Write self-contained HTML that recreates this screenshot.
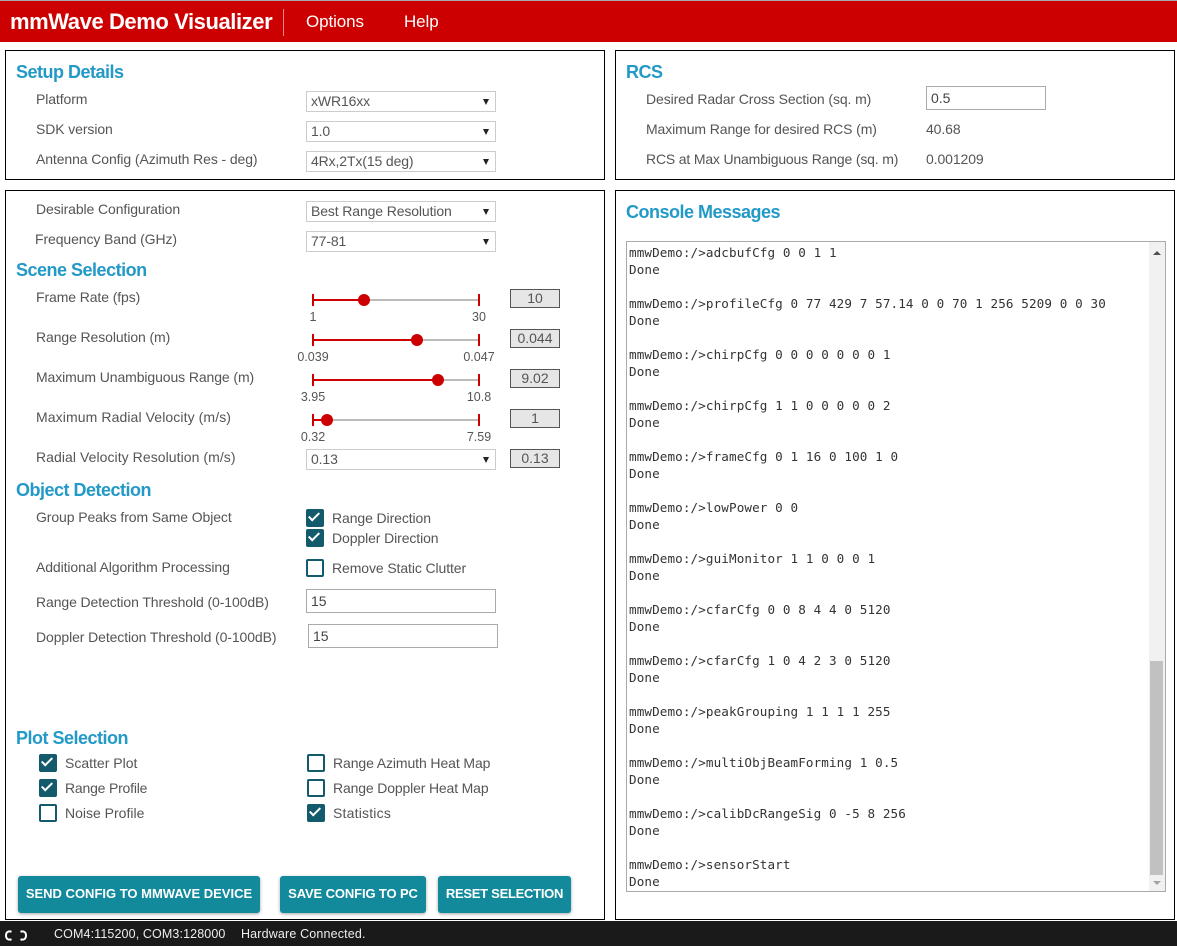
<!DOCTYPE html>
<html><head><meta charset="utf-8"><style>
html,body{margin:0;padding:0;width:1177px;height:946px;overflow:hidden;background:#fff;font-family:"Liberation Sans",sans-serif;color:#555;font-size:14px}
div,span,svg{position:absolute;box-sizing:border-box}
.t{white-space:nowrap;line-height:20px;height:20px;letter-spacing:-.1px}
.h{white-space:nowrap;line-height:24px;font-size:18px;font-weight:bold;color:#2299c7;letter-spacing:-.5px}
.p{border:1px solid #000;background:#fff}
.s{left:306px;width:190px;height:21px;border:1px solid #ccc;line-height:18px;padding-left:4px;color:#555;white-space:nowrap;letter-spacing:-.12px}
.s:after{content:"";position:absolute;right:6px;top:7px;border-left:3px solid transparent;border-right:3px solid transparent;border-top:6px solid #222}
.v{left:510px;width:50px;height:19px;background:#e6e6e6;border:1px solid #555;text-align:center;line-height:17px;color:#555}
.i{border:1px solid #aaa;height:24px;line-height:22px;padding-left:4px;color:#444}
.c{width:18px;height:18px;border:2px solid #135a6c;border-radius:2px;background:#fff}
.k{background:#135a6c}
.k:after{content:"";position:absolute;box-sizing:border-box;left:3.3px;top:-.8px;width:6px;height:11px;border:solid #fff;border-width:0 2px 2px 0;transform:rotate(45deg)}
.n{font-size:12.5px;line-height:16px;height:16px;white-space:nowrap;transform:translateX(-50%);color:#555}
.b{top:876px;height:37px;background:#128a9c;border-radius:3px;color:#fff;font-weight:bold;font-size:13px;line-height:36px;text-align:center;white-space:nowrap;box-shadow:0 1px 3px rgba(0,0,0,.35)}
pre{position:absolute;margin:0;left:2px;top:2px;font-family:"DejaVu Sans Mono",monospace;font-size:12.6px;line-height:17px;color:#333;letter-spacing:.11px}
</style></head><body>
<div style="left:0;top:0;width:1177px;height:42px;background:#cc0000;border-top:1px solid #aaa"></div>
<div class="t" style="left:10px;top:9px;height:26px;line-height:26px;font-size:22px;font-weight:bold;color:#fff;letter-spacing:-.42px">mmWave Demo Visualizer</div>
<div style="left:283px;top:9px;width:1px;height:27px;background:#e88"></div>
<div class="t" style="left:306px;top:12px;font-size:17px;letter-spacing:-.1px;color:#fff">Options</div>
<div class="t" style="left:404px;top:12px;font-size:17px;letter-spacing:-.1px;color:#fff">Help</div>

<div class="p" style="left:5px;top:50px;width:600px;height:130px"></div>
<div class="p" style="left:615px;top:50px;width:560px;height:130px"></div>
<div class="p" style="left:5px;top:190px;width:600px;height:730px"></div>
<div class="p" style="left:615px;top:190px;width:560px;height:730px"></div>

<div class="h" style="left:16px;top:60px">Setup Details</div>
<div class="t" style="left:36px;top:89px">Platform</div>
<div class="s" style="top:91px">xWR16xx</div>
<div class="t" style="left:36px;top:119px">SDK version</div>
<div class="s" style="top:121px">1.0</div>
<div class="t" style="left:36px;top:149px">Antenna Config (Azimuth Res - deg)</div>
<div class="s" style="top:151px">4Rx,2Tx(15 deg)</div>

<div class="h" style="left:626px;top:60px">RCS</div>
<div class="t" style="left:646px;top:89px">Desired Radar Cross Section (sq. m)</div>
<div class="i" style="left:926px;top:86px;width:120px">0.5</div>
<div class="t" style="left:646px;top:119px">Maximum Range for desired RCS (m)</div>
<div class="t" style="left:926px;top:119px">40.68</div>
<div class="t" style="left:646px;top:149px;letter-spacing:-.17px">RCS at Max Unambiguous Range (sq. m)</div>
<div class="t" style="left:926px;top:149px">0.001209</div>

<div class="t" style="left:36px;top:199px">Desirable Configuration</div>
<div class="s" style="top:201px">Best Range Resolution</div>
<div class="t" style="left:35px;top:229px">Frequency Band (GHz)</div>
<div class="s" style="top:231px">77-81</div>

<div class="h" style="left:16px;top:258px">Scene Selection</div>
<div class="t" style="left:36px;top:287px">Frame Rate (fps)</div>
<div class="t" style="left:36px;top:327px">Range Resolution (m)</div>
<div class="t" style="left:36px;top:367px">Maximum Unambiguous Range (m)</div>
<div class="t" style="left:36px;top:407px;letter-spacing:.1px">Maximum Radial Velocity (m/s)</div>
<div class="t" style="left:36px;top:447px;letter-spacing:.06px">Radial Velocity Resolution (m/s)</div>

<svg style="left:300px;top:285px" width="200" height="150" viewBox="0 0 200 150">
<g fill="none">
<path d="M13 15H179M13 55H179M13 95H179M13 135H179" stroke="#bbb" stroke-width="2"/>
<path d="M13 15H64M13 55H117M13 95H138M13 135H27" stroke="#cc0000" stroke-width="2"/>
<path d="M13 9V21M179 9V21M13 49V61M179 49V61M13 89V101M179 89V101M13 129V141M179 129V141" stroke="#cc0000" stroke-width="2"/>
</g>
<g fill="#cc0000"><circle cx="64" cy="15" r="6"/><circle cx="117" cy="55" r="6"/><circle cx="138" cy="95" r="6"/><circle cx="27" cy="135" r="6"/></g>
</svg>
<div class="n" style="left:313px;top:309px">1</div><div class="n" style="left:479px;top:309px">30</div>
<div class="n" style="left:313px;top:349px">0.039</div><div class="n" style="left:479px;top:349px">0.047</div>
<div class="n" style="left:313px;top:389px">3.95</div><div class="n" style="left:479px;top:389px">10.8</div>
<div class="n" style="left:313px;top:429px">0.32</div><div class="n" style="left:479px;top:429px">7.59</div>
<div class="v" style="top:289px">10</div>
<div class="v" style="top:329px">0.044</div>
<div class="v" style="top:369px">9.02</div>
<div class="v" style="top:409px">1</div>
<div class="s" style="top:449px">0.13</div>
<div class="v" style="top:449px">0.13</div>

<div class="h" style="left:16px;top:478px">Object Detection</div>
<div class="t" style="left:36px;top:507px">Group Peaks from Same Object</div>
<div class="c k" style="left:306px;top:509px"></div><div class="t" style="left:332px;top:508px">Range Direction</div>
<div class="c k" style="left:306px;top:529px"></div><div class="t" style="left:332px;top:528px">Doppler Direction</div>
<div class="t" style="left:36px;top:557px">Additional Algorithm Processing</div>
<div class="c" style="left:306px;top:559px"></div><div class="t" style="left:332px;top:558px">Remove Static Clutter</div>
<div class="t" style="left:36px;top:592px">Range Detection Threshold (0-100dB)</div>
<div class="i" style="left:306px;top:589px;width:190px">15</div>
<div class="t" style="left:36px;top:627px">Doppler Detection Threshold (0-100dB)</div>
<div class="i" style="left:308px;top:624px;width:190px">15</div>

<div class="h" style="left:16px;top:726px">Plot Selection</div>
<div class="c k" style="left:39px;top:754px"></div><div class="t" style="left:65px;top:753px;letter-spacing:0">Scatter Plot</div>
<div class="c k" style="left:39px;top:779px"></div><div class="t" style="left:65px;top:778px;letter-spacing:-.2px">Range Profile</div>
<div class="c" style="left:39px;top:804px"></div><div class="t" style="left:65px;top:803px;letter-spacing:0">Noise Profile</div>
<div class="c" style="left:307px;top:754px"></div><div class="t" style="left:333px;top:753px">Range Azimuth Heat Map</div>
<div class="c" style="left:307px;top:779px"></div><div class="t" style="left:333px;top:778px;letter-spacing:-.15px">Range Doppler Heat Map</div>
<div class="c k" style="left:307px;top:804px"></div><div class="t" style="left:333px;top:803px;letter-spacing:.2px">Statistics</div>

<div class="b" style="left:18px;width:242px">SEND CONFIG TO MMWAVE DEVICE</div>
<div class="b" style="left:280px;width:146px;letter-spacing:-.12px">SAVE CONFIG TO PC</div>
<div class="b" style="left:438px;width:133px;letter-spacing:-.27px">RESET SELECTION</div>

<div class="h" style="left:626px;top:200px">Console Messages</div>
<div style="left:626px;top:241px;width:540px;height:651px;border:1px solid #aaa;overflow:hidden;background:#fff">
<pre>mmwDemo:/&gt;adcbufCfg 0 0 1 1
Done

mmwDemo:/&gt;profileCfg 0 77 429 7 57.14 0 0 70 1 256 5209 0 0 30
Done

mmwDemo:/&gt;chirpCfg 0 0 0 0 0 0 0 1
Done

mmwDemo:/&gt;chirpCfg 1 1 0 0 0 0 0 2
Done

mmwDemo:/&gt;frameCfg 0 1 16 0 100 1 0
Done

mmwDemo:/&gt;lowPower 0 0
Done

mmwDemo:/&gt;guiMonitor 1 1 0 0 0 1
Done

mmwDemo:/&gt;cfarCfg 0 0 8 4 4 0 5120
Done

mmwDemo:/&gt;cfarCfg 1 0 4 2 3 0 5120
Done

mmwDemo:/&gt;peakGrouping 1 1 1 1 255
Done

mmwDemo:/&gt;multiObjBeamForming 1 0.5
Done

mmwDemo:/&gt;calibDcRangeSig 0 -5 8 256
Done

mmwDemo:/&gt;sensorStart
Done</pre>
<div style="left:522px;top:0;width:17px;height:649px;background:#f1f1f1"></div>
<div style="left:523px;top:419px;width:13px;height:214px;background:#c1c1c1"></div>
<div style="left:526px;top:9px;border-left:4px solid transparent;border-right:4px solid transparent;border-bottom:4px solid #505050"></div>
<div style="left:526px;top:639px;border-left:4px solid transparent;border-right:4px solid transparent;border-top:4px solid #a3a3a3"></div>
</div>

<div style="left:0;top:921px;width:1177px;height:25px;background:#1a1a1a"></div>
<svg style="left:0;top:921px" width="40" height="25" viewBox="0 0 40 25" fill="none" stroke="#fff" stroke-width="2"><path d="M11.5 10.8C9 9.6 6 10.8 6 14.5C6 18.2 9 19.4 11.5 18.2"/><path d="M20.5 10.8C23 9.6 26 10.8 26 14.5C26 18.2 23 19.4 20.5 18.2"/></svg>
<div class="t" style="left:54px;top:924px;font-size:12.5px;color:#eee;letter-spacing:.12px">COM4:115200, COM3:128000</div>
<div class="t" style="left:241px;top:924px;font-size:12.5px;color:#eee;letter-spacing:.16px">Hardware Connected.</div>
</body></html>
